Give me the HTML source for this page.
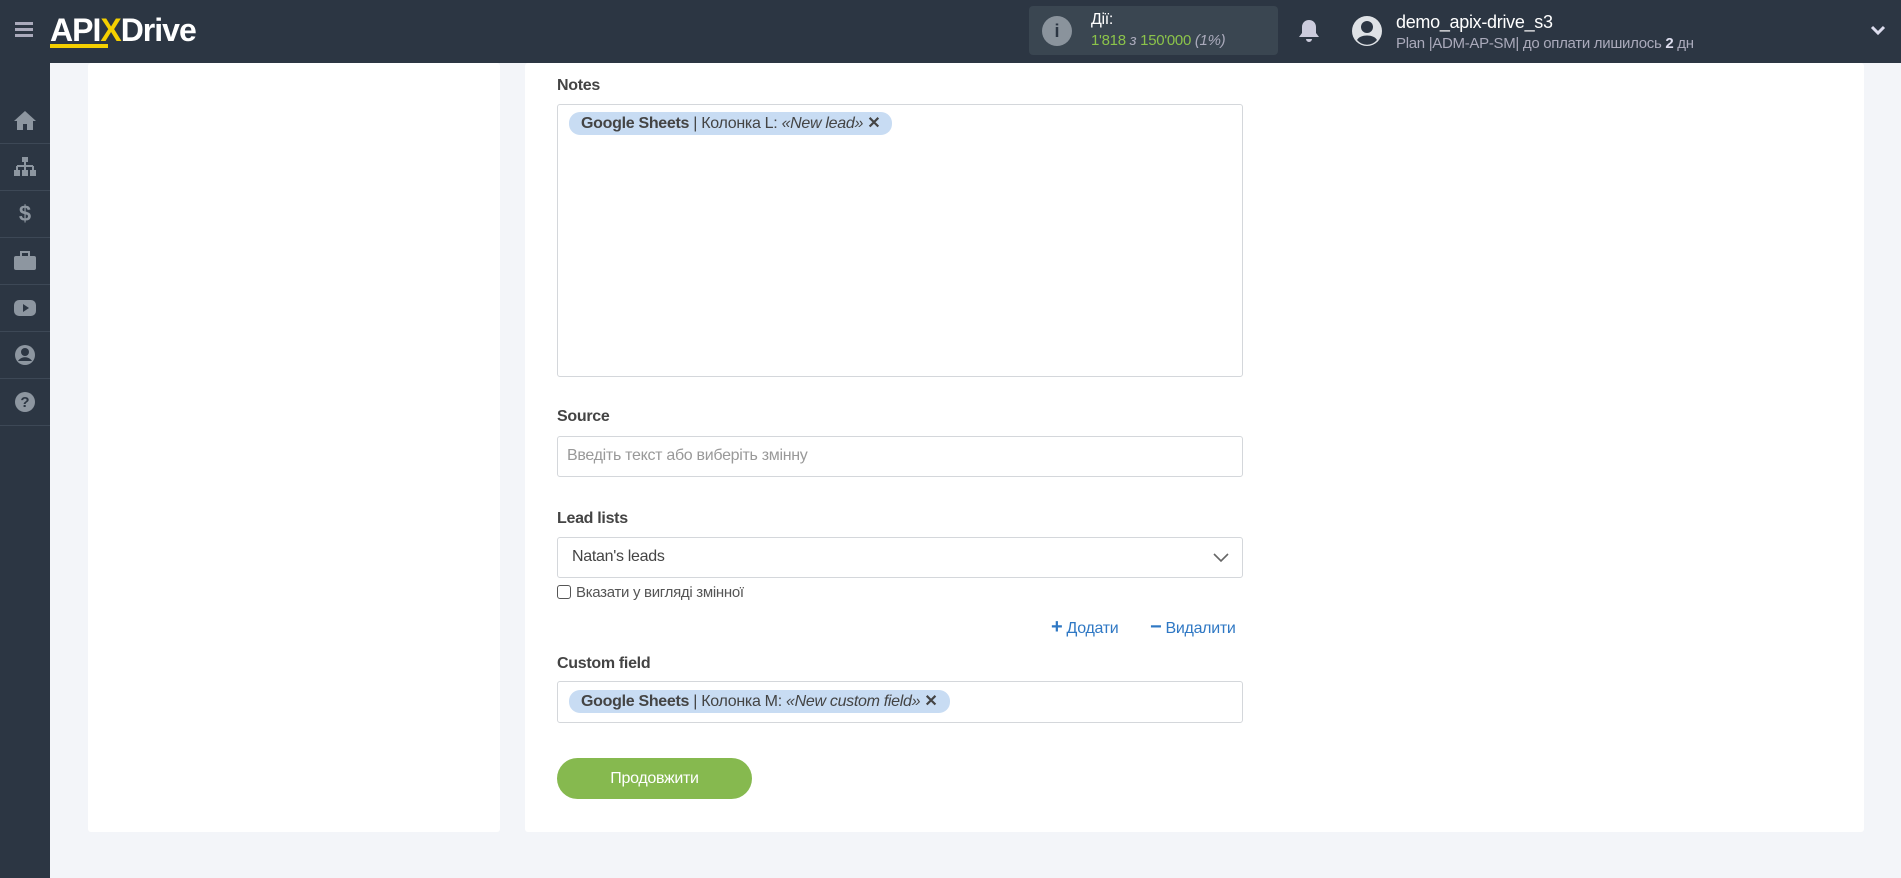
<!DOCTYPE html>
<html><head><meta charset="utf-8"><style>
*{box-sizing:border-box;margin:0;padding:0}
body{width:1901px;height:878px;background:#f3f5f9;font-family:"Liberation Sans",sans-serif;position:relative;overflow:hidden;color:#444}
.hdr{position:absolute;left:0;top:0;width:1901px;height:63px;background:#2c3643}
.side{position:absolute;left:0;top:63px;width:50px;height:815px;background:#2c3643}
.side .it{position:absolute;left:0;width:50px;height:47px;border-bottom:1px solid #3d4856;display:flex;align-items:center;justify-content:center}
.card{position:absolute;background:#fff;border-radius:3px}
.lbl{position:absolute;left:557px;font-size:16px;font-weight:bold;color:#444;letter-spacing:-0.3px}
.box{position:absolute;left:557px;width:686px;border:1px solid #d4d7db;border-radius:3px;background:#fff}
.chip{position:absolute;height:23px;background:#c8dcf3;border-radius:11px;font-size:16px;line-height:23px;padding:0 12px;color:#444;white-space:nowrap;letter-spacing:-0.3px}
.t{font-size:16px;letter-spacing:-0.3px;position:absolute;white-space:nowrap}
</style></head><body>
<div class="hdr">
 <div style="position:absolute;left:15px;top:22px;width:18px;height:3px;background:#aab;box-shadow:0 6px 0 #aab,0 12px 0 #aab"></div>
 <div class="t" style="left:50px;top:12px;font-size:32px;font-weight:bold;color:#fff;letter-spacing:-1px">API<span style="color:#f5d000">X</span>Drive</div>
 <div style="position:absolute;left:50px;top:44px;width:58px;height:4px;background:#f5d000"></div>
 <div style="position:absolute;left:1029px;top:6px;width:249px;height:49px;background:#3a4651;border-radius:4px">
  <div style="position:absolute;left:13px;top:10px;width:30px;height:30px;border-radius:50%;background:#8a939c;color:#2c3643;font-weight:bold;text-align:center;line-height:30px;font-size:18px">i</div>
  <div class="t" style="left:62px;top:5px;color:#fff;font-size:16px">Дії:</div>
  <div class="t" style="left:62px;top:26px;color:#8bc34a;font-size:15px">1'818 <span style="color:#aab;font-style:italic">з</span> 150'000 <span style="color:#aab;font-style:italic">(1%)</span></div>
 </div>
 <svg style="position:absolute;left:1298px;top:18px" width="22" height="26" viewBox="0 0 22 26"><path d="M11 2c-4 0-7 3-7 7v6l-3 4h20l-3-4V9c0-4-3-7-7-7z M8 21a3 3 0 0 0 6 0z" fill="#ccd"/></svg>
 <svg style="position:absolute;left:1351px;top:15px" width="32" height="32" viewBox="0 0 32 32"><circle cx="16" cy="16" r="15" fill="#dfe2e6"/><circle cx="16" cy="12" r="6" fill="#2c3643"/><path d="M6 25c3-6 17-6 20 0a13 13 0 0 1-20 0z" fill="#2c3643"/></svg>
 <div class="t" style="left:1396px;top:12px;color:#fff;font-size:18px">demo_apix-drive_s3</div>
 <div class="t" style="left:1396px;top:35px;color:#aab;font-size:15px">Plan |ADM-AP-SM| до оплати лишилось <b style="color:#dde">2</b> дн</div>
 <svg style="position:absolute;left:1870px;top:25px" width="16" height="12" viewBox="0 0 16 12"><path d="M2 2l6 6 6-6" stroke="#dde" stroke-width="3" fill="none"/></svg>
</div>
<div class="side">
 <div class="it" style="top:34px"><svg width="24" height="22" viewBox="0 0 24 22"><path d="M12 2L1 12h3v9h6v-6h4v6h6v-9h3z" fill="#8d96a0"/></svg></div>
 <div class="it" style="top:81px"><svg width="24" height="22" viewBox="0 0 24 22"><rect x="9" y="1" width="6" height="5" fill="#8d96a0"/><path d="M12 6v4M4 10h16M4 10v4M12 10v4M20 10v4" stroke="#8d96a0" stroke-width="2"/><rect x="1" y="14" width="6" height="6" fill="#8d96a0"/><rect x="9" y="14" width="6" height="6" fill="#8d96a0"/><rect x="17" y="14" width="6" height="6" fill="#8d96a0"/></svg></div>
 <div class="it" style="top:128px;color:#8d96a0;font-weight:bold;font-size:22px">$</div>
 <div class="it" style="top:175px"><svg width="24" height="20" viewBox="0 0 24 20"><rect x="1" y="5" width="22" height="14" rx="2" fill="#8d96a0"/><rect x="8" y="1" width="8" height="5" fill="none" stroke="#8d96a0" stroke-width="2"/></svg></div>
 <div class="it" style="top:222px"><svg width="24" height="18" viewBox="0 0 24 18"><rect x="1" y="1" width="22" height="16" rx="5" fill="#8d96a0"/><path d="M10 5v8l6-4z" fill="#2c3643"/></svg></div>
 <div class="it" style="top:269px"><svg width="22" height="22" viewBox="0 0 22 22"><circle cx="11" cy="11" r="10" fill="#8d96a0"/><circle cx="11" cy="8" r="4" fill="#2c3643"/><path d="M4 17c3-5 11-5 14 0" fill="#2c3643"/></svg></div>
 <div class="it" style="top:316px"><svg width="22" height="22" viewBox="0 0 22 22"><circle cx="11" cy="11" r="10" fill="#8d96a0"/><text x="11" y="16" text-anchor="middle" font-size="15" font-weight="bold" fill="#2c3643" font-family="Liberation Sans">?</text></svg></div>
</div>
<div class="card" style="left:88px;top:63px;width:412px;height:769px"></div>
<div class="card" style="left:525px;top:63px;width:1339px;height:769px"></div>

<div class="lbl" style="top:77px">Notes</div>
<div class="box" style="top:104px;height:273px"></div>
<div class="chip" style="left:569px;top:112px"><b>Google Sheets</b> | Колонка L: <i>«New lead»</i> <b>✕</b></div>

<div class="lbl" style="top:408px">Source</div>
<div class="box" style="top:436px;height:41px"></div>
<div class="t" style="left:567px;top:447px;color:#999">Введіть текст або виберіть змінну</div>

<div class="lbl" style="top:510px">Lead lists</div>
<div class="box" style="top:537px;height:41px"></div>
<div class="t" style="left:572px;top:548px;color:#444">Natan's leads</div>
<svg style="position:absolute;left:1213px;top:553px" width="16" height="10" viewBox="0 0 16 10"><path d="M1 1l7 7 7-7" stroke="#666" stroke-width="1.6" fill="none"/></svg>
<div style="position:absolute;left:557px;top:585px;width:14px;height:14px;border:1.5px solid #555;border-radius:3px"></div>
<div class="t" style="left:576px;top:584px;color:#555;font-size:15px">Вказати у вигляді змінної</div>
<div class="t" style="left:1051px;top:616px;color:#2f78c4;font-size:16px"><b style="font-size:20px">+</b> Додати</div>
<div class="t" style="left:1150px;top:616px;color:#2f78c4;font-size:16px"><b style="font-size:20px">−</b> Видалити</div>

<div class="lbl" style="top:655px">Custom field</div>
<div class="box" style="top:681px;height:42px"></div>
<div class="chip" style="left:569px;top:690px"><b>Google Sheets</b> | Колонка M: <i>«New custom field»</i> <b>✕</b></div>

<div style="position:absolute;left:557px;top:758px;width:195px;height:41px;border-radius:21px;background:#86b94f;color:#fff;font-size:16px;text-align:center;line-height:41px;letter-spacing:-0.3px">Продовжити</div>
</body></html>
